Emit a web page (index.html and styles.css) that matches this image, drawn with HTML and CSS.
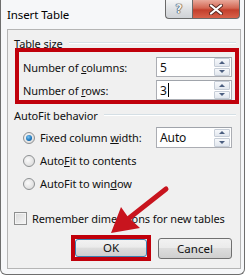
FILE: index.html
```html
<!DOCTYPE html>
<html>
<head>
    <title>Insert Table</title>
    <link rel="stylesheet" href="styles.css">
</head>
<body>
    <div class="window">
        <div class="titlebar">
            <span class="title">Insert Table</span>
            <div class="caption-buttons">
                <div class="cap-btn help"><span>?</span></div>
                <div class="cap-btn close">
                    <svg width="14" height="11" viewBox="0 0 14 11">
                        <path d="M2 1.5 L12 9.5 M12 1.5 L2 9.5" stroke="#5a2a22" stroke-width="4" stroke-linecap="round"/>
                        <path d="M2 1.5 L12 9.5 M12 1.5 L2 9.5" stroke="#ffffff" stroke-width="2.2" stroke-linecap="round"/>
                    </svg>
                </div>
            </div>
        </div>

        <div class="client">
            <div class="group-title"><span>Table size</span></div>
            <div class="highlight size-box">
                <div class="field-row">
                    <label>Number of <u>c</u>olumns:</label>
                    <div class="spin-input">
                        <span class="value">5</span>
                        <div class="spinner"><div class="spin up"></div><div class="spin down"></div></div>
                    </div>
                </div>
                <div class="field-row">
                    <label>Number of <u>r</u>ows:</label>
                    <div class="spin-input">
                        <span class="value">3<span class="caret"></span></span>
                        <div class="spinner"><div class="spin up"></div><div class="spin down"></div></div>
                    </div>
                </div>
            </div>

            <div class="group-title autofit-title"><span>AutoFit behavior</span></div>
            <div class="options">
                <div class="option-row">
                    <span class="radio checked"></span>
                    <label>Fixed column <u>w</u>idth:</label>
                    <div class="spin-input auto-input">
                        <span class="value">Auto</span>
                        <div class="spinner"><div class="spin up"></div><div class="spin down"></div></div>
                    </div>
                </div>
                <div class="option-row">
                    <span class="radio"></span>
                    <label>Auto<u>F</u>it to contents</label>
                </div>
                <div class="option-row">
                    <span class="radio"></span>
                    <label>AutoFit to win<u>d</u>ow</label>
                </div>
            </div>

            <div class="check-row">
                <span class="checkbox"></span>
                <label>Remember dimen<u>s</u>ions for new tables</label>
            </div>

            <div class="button-row">
                <div class="highlight ok-box">
                    <button class="btn default">OK</button>
                </div>
                <button class="btn cancel">Cancel</button>
            </div>
        </div>
    </div>

    <!-- callout arrow pointing at OK -->
    <svg class="arrow" width="247" height="275" viewBox="0 0 247 275">
        <line x1="166" y1="189" x2="128" y2="219" stroke="#c8141e" stroke-width="5" stroke-linecap="round"/>
        <polygon points="111,233 121,207 128,217 140,228" fill="#c8141e"/>
    </svg>
</body>
</html>
```

FILE: styles.css
```css
* {
    box-sizing: border-box;
}
body {
    margin: 0;
    background: #fff;
    font-family: "Noto Sans", sans-serif;
    font-size: 11px;
    letter-spacing: -0.1px;
    color: #111;
}
.window {
    width: 245px;
    height: 275px;
    background: #f6f7f9;
    border: 1px solid #6e6e6e;
    border-top: none;
    border-radius: 0 0 6px 6px;
    padding: 0 3px 5px 6px;
    display: flex;
    flex-direction: column;
}
.titlebar {
    height: 29px;
    display: flex;
    align-items: flex-start;
}
.title {
    line-height: 30px;
    font-size: 11.5px;
    color: #000;
}
.caption-buttons {
    margin-left: auto;
    margin-right: 1px;
    display: flex;
}
.cap-btn {
    height: 19px;
    border: 1px solid #6a6a6a;
    border-top: none;
    display: flex;
    align-items: center;
    justify-content: center;
}
.help {
    width: 27px;
    border-right: none;
    border-radius: 0 0 0 4px;
    background: linear-gradient(#f4f5f6, #dfe1e4 50%, #cfd2d6);
}
.help span {
    font-family: "DejaVu Sans", sans-serif;
    font-weight: bold;
    font-size: 12px;
    color: #f2f2f2;
    text-shadow: 0 0 1px #333, 0 0 1px #333, 0 0 1px #333;
}
.close {
    width: 48px;
    border-radius: 0 0 4px 0;
    background: linear-gradient(#e9a99b, #d36652 45%, #c33f2c 55%, #d8614a);
    padding-top: 1px;
}
.client {
    flex: 1;
    background: #f0f0f0;
    border: 1px solid #b5b5b5;
}
.group-title {
    display: flex;
    align-items: center;
    height: 14px;
    margin-top: 6px;
    padding: 0 4px 0 6px;
}
.group-title::after {
    content: "";
    flex: 1;
    margin-left: 6px;
    border-top: 1px solid #d5dfe5;
    border-bottom: 1px solid #fff;
}
.autofit-title {
    margin-top: 4px;
}
.highlight {
    border: 4px solid #c0000b;
}
.size-box {
    height: 56px;
    margin: -2px 1px 0 7px;
    padding: 5px 3px 0 4px;
    display: flex;
    flex-direction: column;
    gap: 3px;
}
.field-row {
    display: flex;
    align-items: center;
    justify-content: space-between;
    height: 20px;
}
label {
    white-space: nowrap;
}
.spin-input {
    flex-shrink: 0;
    width: 76px;
    height: 20px;
    background: #fff;
    border: 1px solid #abadb3;
    border-top-color: #a0a4ab;
    display: flex;
    align-items: center;
}
.spin-input .value {
    flex: 1;
    padding-left: 3px;
    font-size: 12px;
    display: flex;
    align-items: center;
}
.caret {
    display: inline-block;
    width: 1px;
    height: 14px;
    background: #000;
    margin-left: 1px;
}
.spinner {
    width: 16px;
    height: 18px;
    display: flex;
    flex-direction: column;
    gap: 1px;
    margin-right: 1px;
}
.spin {
    flex: 1;
    border: 1px solid #c6cdd7;
    border-radius: 1px;
    background: linear-gradient(#f6f8fb, #e2e7ee);
    display: flex;
    align-items: center;
    justify-content: center;
}
.spin::before {
    content: "";
    border-left: 3px solid transparent;
    border-right: 3px solid transparent;
}
.up::before {
    border-bottom: 3px solid #4c5f80;
}
.down::before {
    border-top: 3px solid #4c5f80;
}
.options {
    margin-top: 4px;
    padding: 0 8px 0 15px;
}
.option-row {
    display: flex;
    align-items: center;
    height: 23px;
}
.auto-input {
    height: 21px;
    margin-left: auto;
}
.radio {
    flex-shrink: 0;
    width: 12px;
    height: 12px;
    border-radius: 50%;
    border: 1px solid #8d9092;
    background: radial-gradient(circle at 40% 40%, #fbfbfb, #d4d4d4);
    margin-right: 5px;
    display: flex;
    align-items: center;
    justify-content: center;
}
.radio.checked::after {
    content: "";
    width: 6px;
    height: 6px;
    border-radius: 50%;
    background: radial-gradient(circle at 40% 35%, #7cc4f2, #1a73b8 60%, #0d4f88);
}
.check-row {
    display: flex;
    align-items: center;
    height: 21px;
    margin-top: 13px;
    padding-left: 6px;
}
.checkbox {
    flex-shrink: 0;
    width: 13px;
    height: 13px;
    border: 1px solid #8e8f8f;
    background: linear-gradient(135deg, #d9d9d9, #f6f6f6);
    box-shadow: inset 0 0 0 1px #f4f4f4;
    margin-right: 5px;
}
.button-row {
    display: flex;
    justify-content: flex-end;
    align-items: center;
    gap: 7px;
    margin-top: 6px;
    padding-right: 8px;
}
.ok-box {
    width: 80px;
    height: 26px;
}
.btn {
    font-family: "Noto Sans", sans-serif;
    font-size: 11.5px;
    color: #111;
    border: 1px solid #707070;
    border-radius: 3px;
    background: linear-gradient(#f2f2f2, #ebebeb 45%, #dddddd 50%, #cfcfcf);
    padding: 0;
}
.default {
    width: 72px;
    height: 18px;
    border-color: #3c7fb1;
    line-height: 14px;
}
.cancel {
    width: 74px;
    height: 21px;
}
.arrow {
    position: absolute;
    left: 0;
    top: 0;
    pointer-events: none;
}
```
